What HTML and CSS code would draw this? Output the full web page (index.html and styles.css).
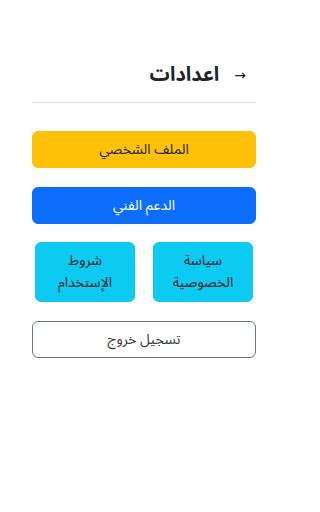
FILE: index.html
```html
<!DOCTYPE html>
<html lang="ar">
<head>
<meta charset="utf-8">
<link rel="stylesheet" href="styles.css">
</head>
<body>
<div class="page" dir="rtl">
  <header class="header">
    <span class="back">&#8594;</span>
    <h1 class="title">اعدادات</h1>
  </header>
  <hr class="divider">
  <div class="actions">
    <button class="btn btn-warning">الملف الشخصي</button>
    <button class="btn btn-primary">الدعم الفني</button>
    <div class="pair">
      <button class="tile">سياسة<br>الخصوصية</button>
      <button class="tile">شروط<br>الإستخدام</button>
    </div>
    <button class="btn btn-outline">تسجيل خروج</button>
  </div>
</div>
</body>
</html>
```
FILE: styles.css
```css
* { box-sizing: border-box; }
html, body { margin: 0; padding: 0; background: #fff; }
body {
  font-family: "Noto Sans Arabic", "DejaVu Sans", sans-serif;
  color: #212529;
}
.page {
  width: 288px;
  padding: 60px 32px 0;
}
.header {
  display: flex;
  align-items: center;
  gap: 15px;
  padding-right: 10px;
  height: 30px;
}
.back {
  font-family: "DejaVu Sans", sans-serif;
  font-size: 14px;
  color: #212529;
  line-height: 1;
}
.title {
  margin: 0;
  font-size: 20px;
  font-weight: bold;
  line-height: 30px;
}
.divider {
  margin: 12px 0 0;
  border: 0;
  border-top: 1px solid #dee2e6;
}
.actions {
  display: flex;
  flex-direction: column;
  margin-top: 28px;
}
.btn {
  font-family: inherit;
  font-size: 14px;
  height: 37px;
  border-radius: 6px;
  border: 1px solid transparent;
  width: 100%;
  padding: 0;
  cursor: pointer;
}
.btn-warning { background: #ffc107; border-color: #ffc107; color: #212529; }
.btn-primary { background: #0d6efd; border-color: #0d6efd; color: #fff; margin-top: 19px; }
.pair {
  display: grid;
  grid-template-columns: 100px 100px;
  gap: 18px;
  padding: 0 3px;
  margin-top: 18px;
}
.tile {
  font-family: inherit;
  font-size: 14px;
  line-height: 22px;
  height: 60px;
  background: #0dcaf0;
  border: 1px solid #0dcaf0;
  border-radius: 6px;
  color: #212529;
  padding: 0;
}
.btn-outline {
  margin-top: 19px;
  background: #fff;
  border-color: #6c757d;
  color: #343a40;
}
```
